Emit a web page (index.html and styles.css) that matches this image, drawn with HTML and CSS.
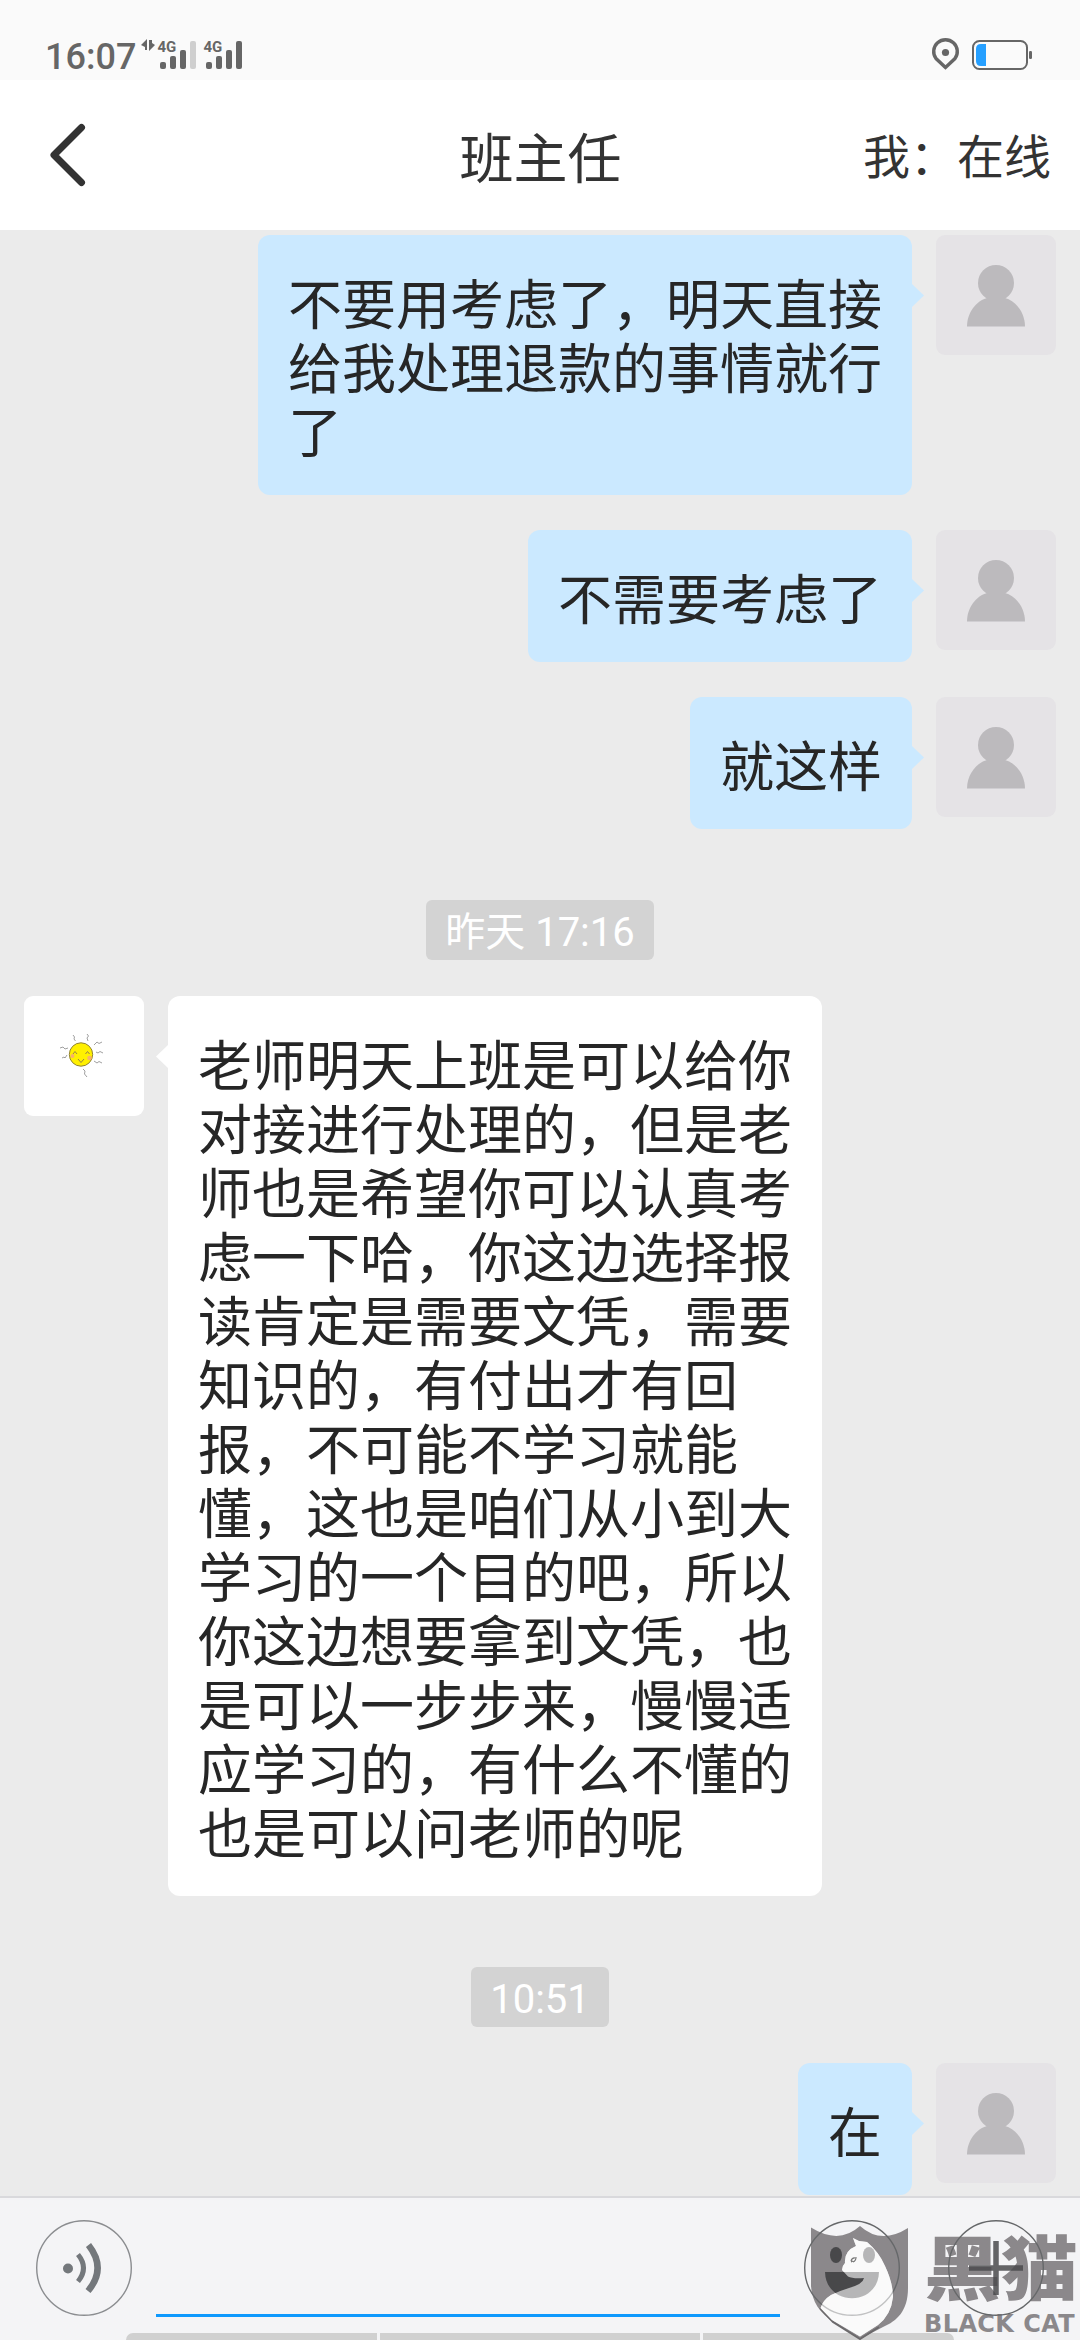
FILE: index.html
```html
<!DOCTYPE html>
<html lang="zh-CN">
<head>
<meta charset="utf-8">
<title>班主任</title>
<link rel="stylesheet" href="styles.css">
</head>
<body>
<svg class="defs" width="0" height="0">
  <symbol id="person" viewBox="0 0 120 120">
    <circle cx="60" cy="48" r="18"/>
    <path d="M31 91.500C31 78 40 66 51 63H69C80 66 89 78 89 91.500Z"/>
  </symbol>
</svg>
<div class="screen">
  <div class="status">
    <span class="clock">16:07</span>
    <svg class="signals" width="110" height="40" viewBox="138 36 110 40">
      <g fill="#666">
        <path d="M141 45L147 39V50H145V47ZM149 40H152V43L155 45L149 51Z"/>
        <rect x="160" y="62" width="6" height="7" rx="2"/>
        <rect x="170" y="56" width="6" height="13" rx="2"/>
        <rect x="180" y="50" width="6" height="19" rx="2"/>
        <rect x="206" y="62" width="6" height="7" rx="2"/>
        <rect x="216" y="56" width="6" height="13" rx="2"/>
        <rect x="226" y="50" width="6" height="19" rx="2"/>
        <rect x="236" y="41" width="6" height="28" rx="2"/>
        <text class="net" x="157.500" y="52">4G</text>
        <text class="net" x="203.500" y="52">4G</text>
      </g>
      <rect x="190" y="41" width="6" height="28" rx="2" fill="#cfcfcf"/>
    </svg>
    <svg class="power" width="104" height="34" viewBox="930 37 104 34">
      <path d="M945.500 67.500L936 58.500A11.800 11.800 0 1 1 955 58.500Z" fill="none" stroke="#666" stroke-width="3.400"/>
      <circle cx="945.500" cy="52.500" r="3.600" fill="#666"/>
      <rect x="973" y="41" width="54" height="28" rx="6.500" fill="none" stroke="#666" stroke-width="2"/>
      <path d="M986 44V66H981Q976 66 976 61V49Q976 44 981 44Z" fill="#259fff"/>
      <rect x="1029" y="51" width="3" height="8" rx="1.200" fill="#666"/>
    </svg>
  </div>
  <header class="nav">
    <svg class="back" width="40" height="66" viewBox="0 0 40 66"><path d="M35.500 5.500L8 33L35.500 60.500" fill="none" stroke="#333" stroke-width="7" stroke-linecap="round" stroke-linejoin="round"/></svg>
    <h1 class="title">班主任</h1>
    <span class="state">我：在线</span>
  </header>
  <main class="chat">
    <div class="row mine"><div class="bubble">不要用考虑了，明天直接<br>给我处理退款的事情就行<br>了</div><svg class="avatar"><use href="#person"/></svg></div>
    <div class="row mine"><div class="bubble">不需要考虑了</div><svg class="avatar"><use href="#person"/></svg></div>
    <div class="row mine"><div class="bubble">就这样</div><svg class="avatar"><use href="#person"/></svg></div>
    <div class="time first">昨天 17:16</div>
    <div class="row theirs">
      <svg class="avatar sun" viewBox="0 0 120 120">
        <circle cx="57" cy="58.500" r="11.700" fill="#fff000" stroke="#918338" stroke-width="1"/>
        <circle cx="48.500" cy="60" r="2" fill="#f7b26c"/><circle cx="65.500" cy="62" r="2.300" fill="#f7b26c"/>
        <g fill="none" stroke="#98824a" stroke-width="1">
          <path d="M49 58L51 55.500L53 58M61.500 58L63.500 55.500L65.500 58M54 63L57 66.500L60 63"/>
        </g>
        <g fill="none" stroke="#888" stroke-width=".8">
          <path d="M49 39L50.500 41L50 43L51.500 45M63 38L64.500 40L63 42L64 45M70 49L73 46L75 47.500L78 46M72 56L74 57L76 55.500L79 57M70 65L73 67L75 65.500L78 67M36 52L39 51L41 53L44 52M38 62L40 61L41 62L43 59M59 73L61 75L60.500 78L63 81"/>
        </g>
      </svg>
      <div class="bubble">老师明天上班是可以给你<br>对接进行处理的，但是老<br>师也是希望你可以认真考<br>虑一下哈，你这边选择报<br>读肯定是需要文凭，需要<br>知识的，有付出才有回<br>报，不可能不学习就能<br>懂，这也是咱们从小到大<br>学习的一个目的吧，所以<br>你这边想要拿到文凭，也<br>是可以一步步来，慢慢适<br>应学习的，有什么不懂的<br>也是可以问老师的呢</div>
    </div>
    <div class="time second">10:51</div>
    <div class="row mine"><div class="bubble">在</div><svg class="avatar"><use href="#person"/></svg></div>
  </main>
  <footer class="composer">
    <svg class="round" viewBox="0 0 96 96"><circle class="ring" cx="48" cy="48" r="47.300"/><circle cx="32" cy="48.500" r="5" fill="#74787c"/><path d="M42 34.500Q53 48 42 61.500" fill="none" stroke="#74787c" stroke-width="5"/><path d="M52.500 25Q71 48.500 52 71" fill="none" stroke="#74787c" stroke-width="6.500"/></svg>
    <div class="input"></div>
    <div class="keys"><i></i><i></i><i></i></div>
    <!-- shield lies under the smile button, the cat over it -->
    <svg class="shield" width="98" height="116" viewBox="0 0 98 116">
      <path d="M0 2.500Q28 20 49 1Q70 20 97 3V63C97 86 86 96 72 102L49 114L24 98C8 88 1 76 0 61Z" fill="#8b888b"/>
      <path d="M9 83L22 97L49 114L68 102" fill="none" stroke="#6b696b" stroke-width="2"/>
      <path d="M42 13L48 16L56 17Q68 27 74 41Q82 58 82 72Q80 90 67 100L49 111.500L21 95L9.500 83Q12 75 20 70Q28 66 38 63Q52 59 53 53Q42 54 37 51.500L31 45Q31 41 34 38Q33 26 45 21Z" fill="#fafafa"/>
    </svg>
    <svg class="round smile" viewBox="0 0 96 96"><circle class="ring dark" cx="48" cy="48" r="47.300"/><ellipse cx="32" cy="35" rx="6" ry="8"/><ellipse cx="65" cy="35" rx="6" ry="8"/><path d="M21 52H75C74 87 22 87 21 52Z"/></svg>
    <svg class="shield" width="98" height="116" viewBox="0 0 98 116">
      <path d="M42 13L48 16L56 17Q68 27 74 41Q82 58 82 72Q80 90 67 100L49 111.500L21 95L9.500 83Q12 75 20 70Q28 66 38 63Q52 59 53 53Q42 54 37 51.500L31 45Q31 41 34 38Q33 26 45 21Z" fill="#fafafa" fill-opacity=".62"/>
      <path d="M40 36Q41 32.500 44 33M40 37L42 36M45 32Q45 36 42 37" fill="none" stroke="#777" stroke-width="1.200"/>
    </svg>
    <div class="brand"><b class="cn">黑猫</b><b class="en">BLACK CAT</b></div>
    <svg class="round plus" viewBox="0 0 96 96"><circle class="ring dark" cx="48" cy="48" r="47.300"/><path d="M48 21V75M21 48H75" fill="none" stroke="#4a4a4c" stroke-opacity=".85" stroke-width="5.500"/></svg>
  </footer>
</div>
</body>
</html>
```
FILE: styles.css
```css
* { box-sizing: border-box; }
body { margin: 0; font-family: Roboto, "Noto Sans CJK SC", sans-serif; }
.defs { position: absolute; }
.screen { width: 1080px; height: 2340px; display: flex; flex-direction: column; overflow: hidden; background: #ebebeb; }
.status { height: 80px; flex: none; background: #fafafa; display: flex; align-items: flex-start; padding: 36px 46px 0 45px; color: #666; }
.clock { width: 93px; font-size: 36px; line-height: 42px; font-weight: 500; white-space: nowrap; }
.net { font: 700 15px Roboto, sans-serif; }
.power { margin: 1px 0 0 auto; }
.nav { height: 150px; flex: none; background: #fff; color: #333; display: grid; grid-template-columns: 1fr 162px 1fr; align-items: center; padding: 0 29px 0 46px; }
.title { margin: 0; padding-top: 11px; font-size: 54px; font-weight: 400; line-height: 80px; text-indent: -8px; white-space: nowrap; }
.state { justify-self: end; padding-top: 6px; font-size: 47px; line-height: 70px; white-space: nowrap; }
.chat { height: 1966px; flex: none; padding: 5px 24px 0; display: flex; flex-direction: column; }
.row { display: flex; align-items: flex-start; gap: 24px; margin-bottom: 35px; }
.mine { justify-content: flex-end; }
.bubble { position: relative; padding: 40px 30px 28px; border-radius: 12px; font-size: 54px; line-height: 64px; color: #262626; white-space: nowrap; background: #cbe9ff; }
.bubble::after { content: ""; position: absolute; top: 49px; left: 100%; width: 12px; height: 23px; background: #cbe9ff; clip-path: polygon(0 0, 100% 50%, 0 100%); }
.theirs .bubble { background: #fff; }
.theirs .bubble::after { left: -12px; background: #fff; clip-path: polygon(100% 0, 0 50%, 100% 100%); }
.avatar { width: 120px; height: 120px; flex: none; border-radius: 9px; background: #e5e3e6; fill: #bcbabd; }
.sun { background: #fff; }
.time { align-self: center; height: 60px; padding: 0 19px; border-radius: 6px; background: #d3d3d3; color: #fff; font-size: 40px; line-height: 65px; }
.first { margin: 36px 0 36px; }
.second { margin: 36px 0 36px; }
.composer { position: relative; height: 144px; flex: none; background: #f4f4f6; border-top: 2px solid #d9d9dc; display: flex; align-items: flex-start; padding: 22px 36px 0; }
.round { position: relative; width: 96px; height: 96px; flex: none; }
.ring { fill: none; stroke: #8b8d90; stroke-width: 1.400; }
.dark { stroke: #66686a; }
.input { width: 624px; height: 97px; margin: 0 24px; border-bottom: 3px solid #0f99fd; }
.smile { fill: #48484a; }
.plus { margin-left: 48px; }
.keys { position: absolute; left: 126px; bottom: 0; width: 828px; height: 7px; display: grid; grid-template-columns: 251px 1fr 251px; gap: 3px; border-radius: 7px 7px 0 0; overflow: hidden; }
.keys i { background: #d0d0d0; }
.shield { position: absolute; left: 811px; top: 27px; }
.brand { position: absolute; left: 924px; top: 29px; display: flex; flex-direction: column; color: #8b888b; white-space: nowrap; }
.cn { font: 900 77px/76px "Noto Sans CJK SC", sans-serif; transform: scaleY(.92); }
.en { padding-top: 9px; font: 700 24px/24px "DejaVu Sans", sans-serif; letter-spacing: .4px; }
```
